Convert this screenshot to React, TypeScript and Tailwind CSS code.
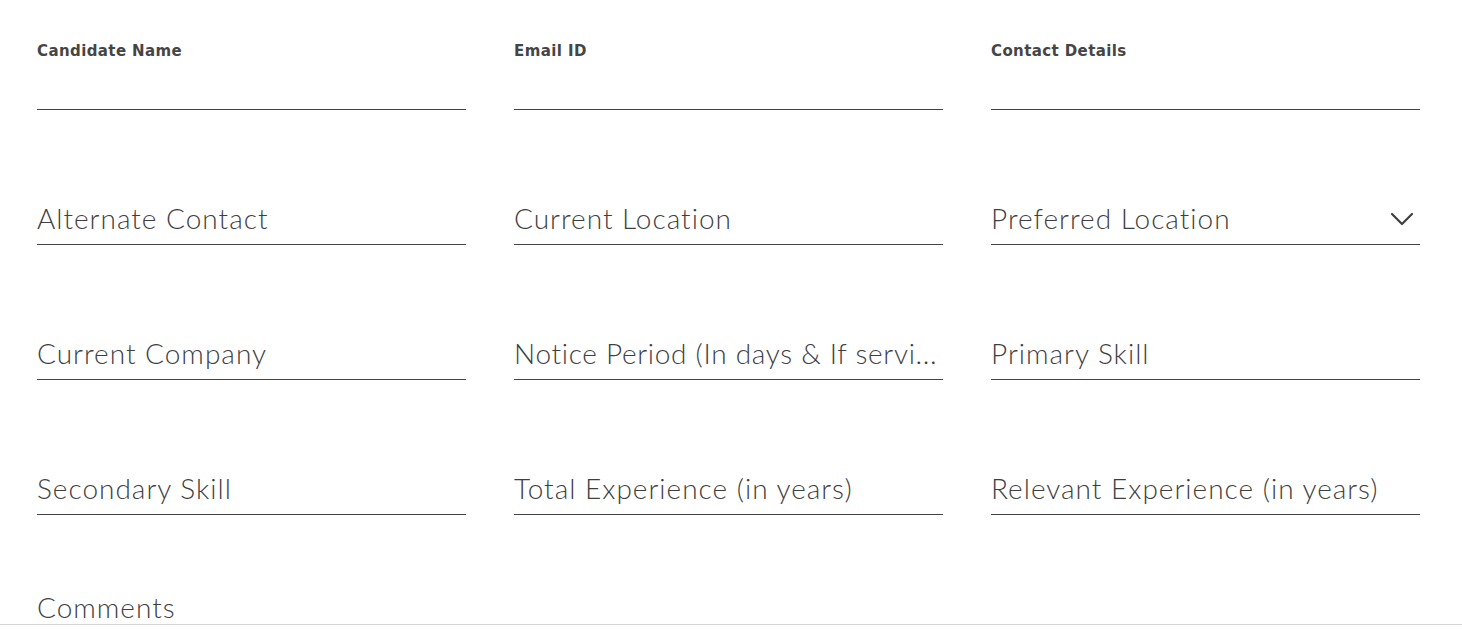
import React from 'react';

const rows: string[][] = [
  ['Alternate Contact', 'Current Location', 'Preferred Location'],
  ['Current Company', 'Notice Period (In days & If servi...', 'Primary Skill'],
  ['Secondary Skill', 'Total Experience (in years)', 'Relevant Experience (in years)'],
];

const Chevron = () => (
  <svg width="24" height="14" viewBox="0 0 24 14" fill="none" className="mb-[18px] mr-[6px]">
    <path d="M2 2l10 10L22 2" stroke="#3f3f3f" strokeWidth="2.2" strokeLinecap="round" strokeLinejoin="round" />
  </svg>
);

const App: React.FC = () => {
  return (
    <div className="w-[1462px] h-[631px] bg-white overflow-hidden text-[#3f3f3f] font-['Lato',sans-serif]">
      <div className="pl-[37px]">
        <div className="grid grid-cols-[429px_429px_429px] gap-x-[48px]">
          {['Candidate Name', 'Email ID', 'Contact Details'].map(label => (
            <div key={label} className="h-[110px] flex flex-col">
              <div className="pt-[41px] font-['DejaVu_Sans',sans-serif] text-[15px] font-bold leading-[20px] tracking-[0.4px] text-[#454545]">{label}</div>
              <div className="mt-auto border-b border-[#444]" />
            </div>
          ))}
          {rows.map(row =>
            row.map(field => (
              <div key={field} className="h-[135px] flex items-end border-b border-[#444]">
                <span
                  className={
                    'flex-1 text-[28px] font-light leading-[34px] pb-[9px] whitespace-nowrap overflow-hidden ' +
                    (field.startsWith('Notice') ? 'tracking-[0.7px]' : 'tracking-[1px]')
                  }
                >
                  {field}
                </span>
                {field === 'Preferred Location' && <Chevron />}
              </div>
            ))
          )}
        </div>
        <div className="pt-[75px] text-[28px] font-light leading-[34px] tracking-[1px]">Comments</div>
      </div>
      <div className="border-b border-[#d6d6d6]" />
    </div>
  );
};

export default App;
